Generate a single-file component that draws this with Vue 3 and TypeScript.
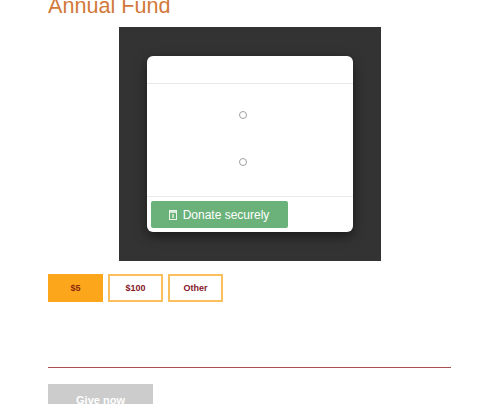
<script setup lang="ts">
const amounts = [
  { label: '$5', active: true },
  { label: '$100', active: false },
  { label: 'Other', active: false },
]
</script>

<template>
  <div class="page">
    <h1 class="title">Annual Fund</h1>
    <div class="frame-wrap">
      <div class="frame">
        <div class="card">
          <div class="card-head"></div>
          <div class="card-body">
            <label class="radio-row"><span class="radio"></span></label>
            <label class="radio-row"><span class="radio"></span></label>
          </div>
          <div class="card-foot">
            <button class="donate">
              <svg class="lock" width="8" height="10" viewBox="0 0 8 10">
                <path fill-rule="evenodd" fill="#fff" fill-opacity=".85" d="M0 0h8v10H0zM1 1v8h6V1z" />
                <rect x="1" y="1" width="6" height="2" fill="#fff" fill-opacity=".7" />
                <rect x="3" y="4" width="2" height="4" fill="#fff" fill-opacity=".6" />
              </svg>
              <span>Donate securely</span>
            </button>
          </div>
        </div>
      </div>
    </div>
    <div class="amounts">
      <button v-for="a in amounts" :key="a.label" class="amount" :class="{ active: a.active }">{{ a.label }}</button>
    </div>
    <hr class="rule" />
    <button class="give">Give now</button>
  </div>
</template>

<style>
html, body { margin: 0; background: #fff; overflow: hidden; }
</style>

<style scoped>
.page {
  height: 404px;
  overflow: hidden;
  box-sizing: border-box;
  padding: 0 49px 0 48px;
  font-family: "Liberation Sans", Arial, sans-serif;
}
.title {
  margin: -7px 0 0;
  height: 34px;
  line-height: 26px;
  font-size: 21.6px;
  font-weight: 400;
  color: #d2793a;
}
.frame-wrap { display: flex; justify-content: center; }
.frame {
  width: 262px;
  height: 234px;
  box-sizing: border-box;
  padding: 29px 28px;
  background: #333;
}
.card {
  height: 176px;
  display: flex;
  flex-direction: column;
  background: #fff;
  border-radius: 6px;
  box-shadow: 0 4px 12px rgba(0, 0, 0, .5);
  overflow: hidden;
}
.card-head { height: 27px; border-bottom: 1px solid #e8e8e8; }
.card-body {
  height: 113px;
  box-sizing: border-box;
  padding-top: 27px;
  display: flex;
  flex-direction: column;
  gap: 39px;
  border-bottom: 1px solid #e8eaec;
}
.radio-row { display: flex; justify-content: center; height: 8px; padding-right: 14px; }
.radio {
  width: 8px;
  height: 8px;
  box-sizing: border-box;
  border: 1px solid #a0a0a0;
  border-radius: 50%;
}
.card-foot { padding: 4px; }
.donate {
  width: 137px;
  height: 27px;
  display: flex;
  align-items: center;
  justify-content: center;
  gap: 6px;
  padding: 0;
  border: 0;
  border-radius: 2px;
  background: #6bb27a;
  color: #fff;
  font-family: inherit;
  font-size: 12px;
}
.amounts { display: flex; gap: 5px; margin-top: 13px; }
.amount {
  width: 55px;
  height: 28px;
  padding: 0;
  box-sizing: border-box;
  border: 2px solid #fbc05d;
  background: #fff;
  color: #85162a;
  font-family: inherit;
  font-size: 9px;
  font-weight: 700;
}
.amount.active { background: #fca61c; border-color: #fca61c; color: #8c2a10; }
.rule {
  margin: 65px 0 0;
  border: 0;
  height: 1px;
  background: #a85050;
}
.give {
  display: block;
  margin-top: 16px;
  width: 105px;
  height: 32px;
  padding: 0;
  border: 0;
  background: #ccc;
  color: #fff;
  font-family: inherit;
  font-size: 11px;
  font-weight: 700;
}
</style>
